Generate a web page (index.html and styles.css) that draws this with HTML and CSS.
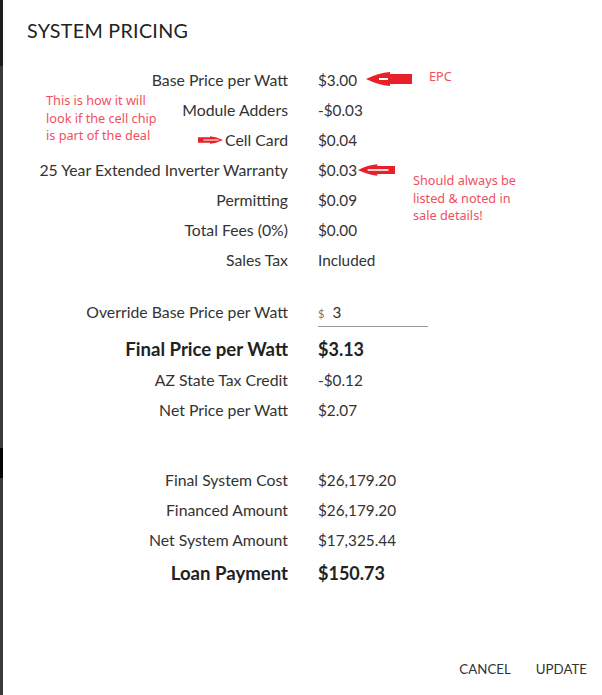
FILE: index.html
```html
<!DOCTYPE html>
<html lang="en">
<head>
  <meta charset="UTF-8">
  <title>System Pricing</title>
  <link rel="stylesheet" href="styles.css">
</head>
<body>
  <div class="page">
    <div class="backdrop"></div>
    <div class="dialog">
      <h2 class="dialog-title">System Pricing</h2>

      <div class="pricing">
        <div class="section">
          <div class="row"><span class="label">Base Price per Watt</span><span class="value">$3.00</span></div>
          <div class="row"><span class="label">Module Adders</span><span class="value">-$0.03</span></div>
          <div class="row"><span class="label">Cell Card</span><span class="value">$0.04</span></div>
          <div class="row"><span class="label">25 Year Extended Inverter Warranty</span><span class="value">$0.03</span></div>
          <div class="row"><span class="label">Permitting</span><span class="value">$0.09</span></div>
          <div class="row"><span class="label">Total Fees (0%)</span><span class="value">$0.00</span></div>
          <div class="row"><span class="label">Sales Tax</span><span class="value">Included</span></div>
        </div>

        <div class="section section-mid">
          <div class="row"><span class="label">Override Base Price per Watt</span>
            <span class="value"><span class="override-input"><span class="prefix">$</span>3</span></span>
          </div>
          <div class="row row-big"><span class="label">Final Price per Watt</span><span class="value">$3.13</span></div>
          <div class="row"><span class="label">AZ State Tax Credit</span><span class="value">-$0.12</span></div>
          <div class="row"><span class="label">Net Price per Watt</span><span class="value">$2.07</span></div>
        </div>

        <div class="section section-low">
          <div class="row"><span class="label">Final System Cost</span><span class="value">$26,179.20</span></div>
          <div class="row"><span class="label">Financed Amount</span><span class="value">$26,179.20</span></div>
          <div class="row"><span class="label">Net System Amount</span><span class="value">$17,325.44</span></div>
          <div class="row row-big row-loan"><span class="label">Loan Payment</span><span class="value">$150.73</span></div>
        </div>
      </div>

      <div class="actions">
        <button class="action-btn">Cancel</button>
        <button class="action-btn">Update</button>
      </div>

      <!-- markup notes drawn over the screenshot -->
      <p class="note note-cell">This is how it will<br>look if the cell chip<br>is part of the deal</p>
      <p class="note note-epc">EPC</p>
      <p class="note note-warranty">Should always be<br>listed &amp; noted in<br>sale details!</p>

      <svg class="arrow arrow-epc" viewBox="0 0 46 14" width="46" height="14">
        <path d="M0 7 Q12 1 24 0 V2 H46 V12 H24 V14 Q12 13 0 7 Z" fill="#e8202a"/>
        <line x1="13" y1="7" x2="22" y2="7" stroke="#fff" stroke-width="2"/>
      </svg>
      <svg class="arrow arrow-cell" viewBox="0 0 46 14" width="25" height="14">
        <path d="M46 7 Q34 1 22 0 V2 H0 V12 H22 V14 Q34 13 46 7 Z" fill="#e8202a"/>
        <line x1="10" y1="7" x2="38" y2="7" stroke="#fff" stroke-width="2"/>
      </svg>
      <svg class="arrow arrow-warranty" viewBox="0 0 46 14" width="37" height="14">
        <path d="M0 7 Q12 1 24 0 V2 H46 V12 H24 V14 Q12 13 0 7 Z" fill="#e8202a"/>
        <line x1="12" y1="7" x2="38" y2="7" stroke="#fff" stroke-width="2"/>
      </svg>
    </div>
  </div>
</body>
</html>
```

FILE: styles.css
```css
body {
  margin: 0;
  font-family: Lato, "Liberation Sans", sans-serif;
  color: #333;
}
.page {
  display: flex;
  height: 695px;
}
.backdrop {
  width: 3px;
  background: linear-gradient(#1c1c1c 0, #1c1c1c 66px, #3a3a3a 66px, #3a3a3a 448px, #050505 448px, #050505 478px, #3a3a3a 478px);
}
.dialog {
  flex: 1;
  position: relative;
  display: flex;
  flex-direction: column;
  background-color: #fff;
}
.dialog-title {
  margin: 0;
  padding: 20px 0 0 24px;
  font-size: 19.7px;
  font-weight: 400;
  line-height: 22px;
  letter-spacing: 0.3px;
  text-transform: uppercase;
  color: #222;
}
.pricing {
  margin-top: 23px;
}
.section-mid {
  margin-top: 22px;
}
.section-low {
  margin-top: 40px;
}
.row {
  display: grid;
  grid-template-columns: 285px auto;
  column-gap: 30px;
  font-size: 15.8px;
  line-height: 30px;
}
.label {
  text-align: right;
}
.value {
  font-size: 15.3px;
}
.row-big {
  font-size: 18.6px;
  font-weight: 700;
  line-height: 31px;
  color: #222;
  margin-top: 7px;
}
.row-big .value {
  font-size: 18px;
}
.row-loan {
  margin-top: 0;
  line-height: 36px;
}
.override-input {
  display: inline-block;
  width: 110px;
  height: 29px;
  border-bottom: 1px solid #999;
}
.prefix {
  font-size: 11px;
  color: #777;
  margin-right: 8px;
}
.actions {
  margin-top: auto;
  display: flex;
  justify-content: flex-end;
  gap: 9px;
  padding: 0 7px 11px 0;
}
.action-btn {
  background: none;
  border: none;
  padding: 0 8px;
  height: 30px;
  font-family: inherit;
  font-size: 13.3px;
  text-transform: uppercase;
  color: #333;
  cursor: pointer;
}
.note {
  position: absolute;
  margin: 0;
  font-family: "Noto Sans", "Open Sans", sans-serif;
  font-size: 12.7px;
  line-height: 17.5px;
  color: #f0505c;
}
.note-cell {
  left: 43px;
  top: 92px;
}
.note-epc {
  left: 426px;
  top: 68px;
}
.note-warranty {
  left: 410px;
  top: 172px;
}
.arrow {
  position: absolute;
}
.arrow-epc {
  left: 363px;
  top: 72px;
}
.arrow-cell {
  left: 195px;
  top: 133px;
}
.arrow-warranty {
  left: 355px;
  top: 163px;
}
```
